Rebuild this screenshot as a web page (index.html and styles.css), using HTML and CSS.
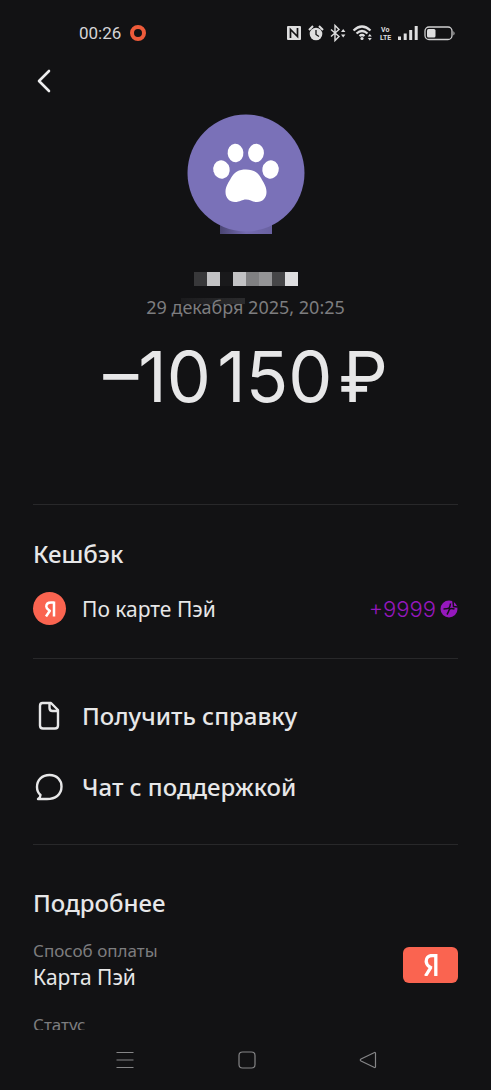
FILE: index.html
```
<!DOCTYPE html>
<html lang="ru">
<head>
<meta charset="utf-8">
<meta name="viewport" content="width=device-width, initial-scale=1">
<title>Операция</title>
<link rel="stylesheet" href="styles.css">
</head>
<body>
<div class="screen">
  <header class="status">
    <span class="clock">00:26</span>
    <svg class="record" viewBox="0 0 16 16" aria-hidden="true"><circle cx="8" cy="8" r="6" fill="none" stroke="#ee5b3a" stroke-width="4"/></svg>
    <svg class="indicators" viewBox="0 0 170 20" aria-hidden="true" fill="#dededf">
      <rect x="1" y="3" width="14" height="14" rx="1"/>
      <path d="M4.500 15V6.500L11.500 13.500V5" fill="none" stroke="#121214" stroke-width="1.700"/>
      <circle cx="30" cy="11" r="6.300"/>
      <path d="M23 7l4-4M37 7l-4-4" stroke="#dededf" stroke-width="2"/>
      <path d="M30 7v4.500l3 2" fill="none" stroke="#121214" stroke-width="1.300"/>
      <path d="M45 6.500l8 7-4 4v-15l4 4-8 7" fill="none" stroke="#dededf" stroke-width="1.400"/>
      <path d="M55 9l2.200-3 2.200 3zM55 11.500l2.200 3 2.200-3z"/>
      <g fill="none" stroke="#dededf" stroke-width="2.200"><path d="M67.500 7.500Q76-.5 84.500 7.500M70.500 10.500Q76 5.500 81.500 10.500M73.500 13Q76 11 78.500 13"/></g>
      <circle cx="76" cy="15.500" r="1.600"/>
      <path d="M81.800 13.500l2-2.500 2 2.500zM81.800 15l2 2.500 2-2.500z"/>
      <text x="95" y="9" class="volte">Vo</text><text x="94" y="17" class="volte">LTE</text>
      <path d="M112 13.500h3V17h-3zM117.700 10.500h3V17h-3zM123.200 7h3v10h-3zM128.700 3h3v14h-3z"/>
      <rect x="139" y="4" width="27" height="12.500" rx="4" fill="none" stroke="#cfcfd0" stroke-width="1.300"/>
      <rect x="141" y="6" width="8.500" height="8.500" rx="1.500"/><path d="M167.500 8q2 2.250 0 4.500z"/>
    </svg>
  </header>

  <main class="content">
    <button class="back" type="button" aria-label="Назад">
      <svg viewBox="0 0 14 24" aria-hidden="true"><path d="M12 2L2 12l10 10" fill="none" stroke="#ededee" stroke-width="2.600" stroke-linecap="round" stroke-linejoin="round"/></svg>
    </button>

    <section class="summary">
      <div class="avatar">
        <svg class="paw" viewBox="0 0 118 120" aria-hidden="true">
          <defs><linearGradient id="shade"><stop offset="0" stop-color="#4a4572"/><stop offset=".5" stop-color="#746bb0"/><stop offset="1" stop-color="#6961a0"/></linearGradient></defs>
          <path d="M33 109H85V120H33z" fill="url(#shade)"/>
          <circle cx="59" cy="59" r="58.500" fill="#7a71b8"/>
          <g fill="#fff">
            <ellipse cx="48.500" cy="39" rx="7.900" ry="9.200" transform="rotate(-5 48.500 39)"/>
            <ellipse cx="69" cy="39" rx="7.900" ry="9.200" transform="rotate(5 69 39)"/>
            <ellipse cx="34.500" cy="55.500" rx="8.200" ry="9.200" transform="rotate(-12 34.500 55.500)"/>
            <ellipse cx="83.500" cy="55.500" rx="8.200" ry="9.200" transform="rotate(12 83.500 55.500)"/>
            <path d="M59 55.500C66 55.500 71 58 74 64C76 68 79.500 72 79.500 78C79.500 84 75.500 88 70 88C65 88 63 85.500 59 85.500C55 85.500 53 88 48 88C42.500 88 38.500 84 38.500 78C38.500 72 42 68 44 64C47 58 52 55.500 59 55.500Z"/>
          </g>
        </svg>
      </div>
      <div class="mosaic" aria-hidden="true"><i class="t1"></i><i class="t2"></i><i class="t3"></i><i class="t2"></i><i class="t4"></i><i class="t5"></i><i class="t6"></i><i class="t7"></i></div>
      <time class="date" datetime="2025-12-29T20:25">29 декабря 2025, 20:25</time>
      <p class="amount">–10&#8202;150&#8202;₽</p>
    </section>

    <section class="cashback">
      <h2 class="title">Кешбэк</h2>
      <div class="line">
        <span class="coin"><svg class="ya" viewBox="0 0 12 16" aria-hidden="true"><path d="M10 .5V15.500M10 1.600H7C3.800 1.600 2.300 3.500 2.300 5.500C2.300 7.500 3.500 8.300 5 9.300L6.500 10.300M6 9.500L2 15.500" fill="none" stroke="#fff" stroke-width="2.500"/></svg></span>
        <span class="name">По карте Пэй</span>
        <span class="points">+9999</span>
        <svg class="plus" viewBox="0 0 18 18" aria-hidden="true"><circle cx="9" cy="9" r="8.500" fill="#9518bd"/><path d="M3.500 9Q8 8.800 9 8T10.500 3.500M7 14.500Q8.500 12 9.200 9.800T14.500 9M13 1l.5 5.500 4 .5" fill="none" stroke="#121214" stroke-width="1.500"/></svg>
      </div>
    </section>

    <section class="actions">
      <button class="action" type="button">
        <svg class="icon" viewBox="0 0 32 32" aria-hidden="true"><path d="M9.500 3H18L25 10V25.500Q25 28.500 22 28.500H10Q7 28.500 7 25.500V6Q7 3 9.500 3ZM16.500 3V8Q16.500 11 19.500 11H25" fill="none" stroke="#e7e7e8" stroke-width="2.400" stroke-linejoin="round"/></svg>
        Получить справку
      </button>
      <button class="action" type="button">
        <svg class="icon" viewBox="0 0 32 32" aria-hidden="true"><path d="M16.500 4C24 4 28.500 9 28.500 15.500C28.500 24 22 28 14 28H5Q7.500 26.500 7.500 24Q4 21 4 16C4 9 9 4 16.500 4Z" fill="none" stroke="#e7e7e8" stroke-width="2.400" stroke-linejoin="round"/></svg>
        Чат с поддержкой
      </button>
    </section>

    <section class="details">
      <h2 class="title">Подробнее</h2>
      <div class="detail">
        <dl class="pair"><dt>Способ оплаты</dt><dd>Карта Пэй</dd></dl>
        <span class="card"><svg class="ya-large" viewBox="0 0 12 16" aria-hidden="true"><path d="M9.500 0V16M9.500 1.100H6.800C4 1.100 2.500 3 2.500 5.200C2.500 7.500 3.500 8.300 5 9.300L6.500 10.300M6 9.500L2 16" fill="none" stroke="#fff" stroke-width="2.400"/></svg></span>
      </div>
      <dl class="pair next"><dt>Статус</dt></dl>
    </section>
  </main>

  <nav class="nav">
    <button type="button" aria-label="Недавние"><svg viewBox="0 0 20 20"><path d="M1.500 2.500h17M1.500 10h17M1.500 17.500h17"/></svg></button>
    <button type="button" aria-label="Домой"><svg viewBox="0 0 20 20"><rect x="2" y="2" width="16" height="16" rx="3.500"/></svg></button>
    <button type="button" aria-label="Назад"><svg viewBox="0 0 20 20"><path d="M17.500 3.200V16.800Q17.500 18 16 17.300L3 11Q1.500 10 3 9L16 2.700Q17.500 2 17.500 3.200Z"/></svg></button>
  </nav>
</div>
</body>
</html>
```
FILE: styles.css
```
* { box-sizing: border-box; }
body { margin: 0; background: #121214; color: #e7e7e8; font-family: "Noto Sans", sans-serif; }
button { background: none; border: 0; padding: 0; color: inherit; font: inherit; cursor: pointer; }
svg { display: block; }
h2, p, dl, dd { margin: 0; }

.screen { height: 100vh; display: flex; flex-direction: column; }

.status { display: flex; align-items: center; height: 66px; padding: 0 35px 0 79px; flex: none; }
.clock { font: 17px/24px Roboto, sans-serif; color: #d5d5d6; }
.record { width: 16px; height: 16px; margin-left: 9px; }
.indicators { width: 170px; height: 20px; margin-left: auto; }
.volte { font: bold 7px Roboto, sans-serif; }

.content { flex: 1; min-height: 0; overflow: hidden; padding: 0 33px; display: flex; flex-direction: column; }
.content > * { flex: none; }
.back { align-self: flex-start; padding: 3px 4px; }
.back svg { width: 14px; height: 24px; }

.summary { display: flex; flex-direction: column; align-items: center; padding: 18px 0 85px; border-bottom: 1px solid #28282a; }
.paw { width: 118px; height: 120px; }
.mosaic { display: flex; margin-top: 38px; height: 14px; }
.mosaic i { width: 13px; }
.t1 { background: #38383a; }
.t2 { background: #c2c2c4; }
.t3 { background: #19191b; }
.t4 { background: #808082; }
.t5 { background: #949496; }
.t6 { background: #464648; }
.t7 { background: #dedee0; }
.date { margin-top: 9px; font-size: 18px; line-height: 24px; color: #7d7d7f;
  background: linear-gradient(90deg, #1b1b1d, #2b2b2d) 35px 3px / 64px 6px no-repeat; }
.amount { margin-top: 18px; padding-bottom: 2px; font: 400 70px/80px Inter, "Noto Sans", sans-serif; white-space: nowrap; }

.title { font-size: 24px; font-weight: 500; line-height: 32px; }
.cashback { padding: 33px 0; border-bottom: 1px solid #28282a; }
.line { display: flex; align-items: center; height: 33px; margin-top: 22px; font-size: 21px; }
.coin { width: 33px; height: 33px; border-radius: 50%; background: #fa6450; display: grid; place-items: center; }
.ya { width: 12px; height: 16px; }
.name { margin-left: 16px; }
.points { margin-left: auto; color: #9518bd; font-family: Inter, sans-serif; font-size: 22px; font-weight: 300; }
.plus { width: 18px; height: 18px; margin-left: 4px; }

.actions { display: flex; flex-direction: column; gap: 39px; padding: 41px 0; border-bottom: 1px solid #28282a; }
.action { display: flex; align-items: center; gap: 17px; font-size: 24px; font-weight: 500; line-height: 32px; }
.icon { width: 32px; height: 32px; }

.details { padding-top: 42px; }
.detail { display: flex; justify-content: space-between; align-items: center; margin-top: 20px; }
.pair dt { font-size: 17px; line-height: 24px; color: #7d7d7f; }
.pair dd { font-size: 21px; line-height: 28px; }
.card { width: 55px; height: 36px; border-radius: 6px; background: #fa6450; display: grid; place-items: center; }
.ya-large { width: 18px; height: 22px; }
.next { margin-top: 22px; }

.nav { flex: none; height: 60px; display: flex; justify-content: space-between; align-items: center; padding: 0 113px 0 115px; }
.nav svg { width: 20px; height: 20px; fill: none; stroke: #858587; stroke-width: 1.2; }
```
